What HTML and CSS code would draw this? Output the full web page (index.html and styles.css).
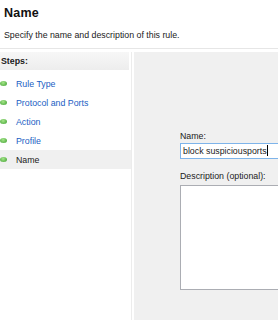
FILE: index.html
```html
<!DOCTYPE html>
<html>
<head>
<meta charset="utf-8">
<link rel="stylesheet" href="styles.css">
</head>
<body>
<div class="wizard">
  <header class="head">
    <h1 class="title">Name</h1>
    <p class="sub">Specify the name and description of this rule.</p>
  </header>
  <div class="main">
    <nav class="steps">
      <div class="steps-head">Steps:</div>
      <ul class="step-list">
        <li class="step"><span class="dot"></span><span class="link">Rule Type</span></li>
        <li class="step"><span class="dot"></span><span class="link">Protocol and Ports</span></li>
        <li class="step"><span class="dot"></span><span class="link">Action</span></li>
        <li class="step"><span class="dot"></span><span class="link">Profile</span></li>
        <li class="step current"><span class="dot"></span><span class="cur">Name</span></li>
      </ul>
    </nav>
    <section class="pane">
      <label class="lbl">Name:</label>
      <div class="input">block suspiciousports<span class="caret"></span></div>
      <label class="lbl lbl2">Description (optional):</label>
      <div class="textarea"></div>
    </section>
  </div>
</div>
</body>
</html>
```
FILE: styles.css
```css
html, body {
  margin: 0;
  padding: 0;
  background: #fff;
}
body {
  width: 278px;
  height: 321px;
  overflow: hidden;
  font-family: "Liberation Sans", Arial, sans-serif;
  font-size: 8.8px;
  color: #1a1a1a;
}
.wizard {
  display: flex;
  flex-direction: column;
  height: 321px;
}
.head {
  height: 49px;
  border-bottom: 1px solid #e6e6e6;
  box-sizing: border-box;
  padding: 6px 0 0 4px;
}
.title {
  margin: 0;
  font-size: 12.5px;
  font-weight: bold;
  line-height: 14px;
  letter-spacing: 0.2px;
  color: #111;
}
.sub {
  margin: 9px 0 0 0;
  line-height: 12px;
}
.main {
  flex: 1;
  display: flex;
  padding-top: 3px;
  padding-bottom: 1px;
}
.steps {
  width: 131px;
  border-right: 1px solid #ececec;
  background: #fff;
  flex: none;
}
.steps-head {
  height: 18px;
  background: linear-gradient(#f7f7f7, #ededed);
  font-weight: bold;
  padding-left: 1px;
  line-height: 18px;
  margin-right: 2px;
}
.step-list {
  list-style: none;
  margin: 4px 0 0 0;
  padding: 0;
}
.step {
  display: flex;
  align-items: center;
  height: 19px;
  padding-left: 0;
}
.step.current {
  background: #f0f0f0;
}
.dot {
  width: 7px;
  height: 5px;
  border-radius: 50%;
  background: radial-gradient(circle at 45% 35%, #a6e68a, #3a9d2c);
  margin-right: 9px;
}
.link {
  color: #2160c4;
}
.pane {
  flex: 1;
  margin-left: 2px;
  background: #f0f0f0;
  padding: 78px 0 0 46px;
  display: flex;
  flex-direction: column;
}
.lbl {
  line-height: 12px;
  height: 12px;
}
.input {
  margin-top: 1px;
  height: 16px;
  border: 1px solid #7eb4ea;
  border-right: none;
  background: #fff;
  line-height: 15px;
  padding-left: 2px;
  box-sizing: border-box;
  margin-right: -2px;
}
.caret {
  display: inline-block;
  width: 1px;
  height: 11px;
  background: #000;
  vertical-align: -2px;
}
.lbl2 {
  margin-top: 11px;
}
.textarea {
  margin-top: 3px;
  height: 103px;
  border: 1px solid #abadb3;
  border-right: none;
  background: #fff;
  margin-right: -2px;
}
```
